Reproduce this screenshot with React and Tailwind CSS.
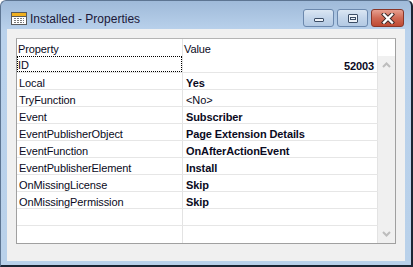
import React from "react";

const rows = [
  { name: "ID", value: "52003", bold: true, right: true, focus: true },
  { name: "Local", value: "Yes", bold: true },
  { name: "TryFunction", value: "<No>" },
  { name: "Event", value: "Subscriber", bold: true },
  { name: "EventPublisherObject", value: "Page Extension Details", bold: true },
  { name: "EventFunction", value: "OnAfterActionEvent", bold: true },
  { name: "EventPublisherElement", value: "Install", bold: true },
  { name: "OnMissingLicense", value: "Skip", bold: true },
  { name: "OnMissingPermission", value: "Skip", bold: true },
  { name: "", value: "" },
  { name: "", value: "" },
];

function TableIcon() {
  return (
    <svg width="16" height="13" viewBox="0 0 16 13">
      <rect x="0.5" y="0.5" width="15" height="12" fill="#fff" stroke="#5a5a5a" />
      <rect x="1" y="1" width="14" height="3" fill="#f0b020" />
      <line x1="1" y1="4.5" x2="15" y2="4.5" stroke="#5a5a5a" />
      <g stroke="#7a7a7a">
        <line x1="3" y1="6.5" x2="13" y2="6.5" />
        <line x1="3" y1="8.5" x2="13" y2="8.5" />
        <line x1="3" y1="10.5" x2="13" y2="10.5" />
      </g>
      <g stroke="#fff">
        <line x1="5.5" y1="6" x2="5.5" y2="11" />
        <line x1="8.5" y1="6" x2="8.5" y2="11" />
        <line x1="11.5" y1="6" x2="11.5" y2="11" />
      </g>
    </svg>
  );
}

function Chevron({ up }) {
  return (
    <svg width="9" height="6" viewBox="0 0 9 6">
      <path
        d={up ? "M1 5 L4.5 1.5 L8 5" : "M1 1 L4.5 4.5 L8 1"}
        fill="none"
        stroke="#bdbdbd"
        strokeWidth="2"
      />
    </svg>
  );
}

export default function App() {
  return (
    <div
      className="w-[413px] h-[267px] flex flex-col rounded-t-[6px] border-t border-l border-[#5d7592] border-r-2 border-b-2 border-r-[#1b2533] border-b-[#1b2533] bg-[linear-gradient(to_bottom,#9fbad9,#bad2ec_30px,#b9d1ea)] overflow-hidden"
      style={{ fontFamily: '"Liberation Sans", Arial, sans-serif' }}
    >
      {/* title bar */}
      <div className="h-[29px] flex items-start">
        <div className="ml-[10px] mt-[11px]">
          <TableIcon />
        </div>
        <div className="ml-[3px] mt-[10px] text-[12px] leading-[16px] text-[#1b1838]">
          Installed - Properties
        </div>
        <div className="ml-auto mr-[7px] mt-[8px] flex gap-[3px]">
          <div className="w-[31px] h-[18px] rounded-[3px] border border-[#6b88ad] bg-[linear-gradient(to_bottom,#dae6f3,#c3d5ea_50%,#b3c9e3)] flex items-center justify-center">
            <div className="w-[10px] h-[4px] mt-[4px] rounded-[1px] border border-[#3b4d66] bg-[#eef3f9]" />
          </div>
          <div className="w-[31px] h-[18px] rounded-[3px] border border-[#6b88ad] bg-[linear-gradient(to_bottom,#dae6f3,#c3d5ea_50%,#b3c9e3)] flex items-center justify-center">
            <div className="w-[10px] h-[9px] rounded-[1px] border border-[#3b4d66] bg-[#eef3f9] flex items-center justify-center">
              <div className="w-[6px] h-[3px] border border-[#3b4d66]" />
            </div>
          </div>
          <div className="w-[33px] h-[18px] rounded-[3px] border border-[#8a3628] bg-[linear-gradient(to_bottom,#e7a090,#d06a55_50%,#bf4a33)] flex items-center justify-center">
            <svg width="14" height="11" viewBox="0 0 14 11">
              <path d="M3 1.5 L11 9.5 M11 1.5 L3 9.5" stroke="#3a2a2a" strokeWidth="4.2" strokeLinecap="square" />
              <path d="M3 1.5 L11 9.5 M11 1.5 L3 9.5" stroke="#ffffff" strokeWidth="2.4" strokeLinecap="square" />
            </svg>
          </div>
        </div>
      </div>

      {/* client area */}
      <div className="flex-1 ml-[6px] mr-[6px] mb-[4px] bg-[#f0f0f0] pt-[9px] pl-[9px] pr-[9px] pb-[17px]">
        <div className="h-full border border-[#a0a0a0] border-t-[#b4b4b4] bg-white flex flex-col text-[11px] leading-[16px] tracking-[-0.1px] text-[#0a0a22]">
          {/* header */}
          <div className="h-[17px] flex">
            <div className="w-[166px] border-r border-[#e3e3e3] pl-[1px] pt-[2px]">Property</div>
            <div className="w-[195px] border-r border-[#e3e3e3] pl-[1px] pt-[2px]">Value</div>
            <div className="flex-1" />
          </div>
          <div className="flex-1 flex">
            <div className="w-[361px] flex flex-col">
              {rows.map((r, i) => (
                <div key={i} className="h-[17px] flex border-b border-[#e6e6e6] last:border-b-0">
                  <div className="w-[166px] border-r border-[#e3e3e3]">
                    <div
                      className={
                        r.focus
                          ? "h-[16px] outline-1 outline-dotted outline-black -outline-offset-1 pl-[1px] pt-[1px]"
                          : "h-[16px] pl-[2px] pt-[2px]"
                      }
                    >
                      {r.name}
                    </div>
                  </div>
                  <div
                    className={
                      "w-[195px] border-r border-[#e3e3e3] pt-[2px] " +
                      (r.right ? "text-right pr-[3px]" : "pl-[3px]") +
                      (r.bold ? " font-bold" : "")
                    }
                  >
                    {r.value}
                  </div>
                </div>
              ))}
            </div>
            {/* scrollbar */}
            <div className="flex-1 bg-[#f0f0f0] flex flex-col items-center justify-between pt-[6px] pb-[6px]">
              <Chevron up />
              <Chevron />
            </div>
          </div>
        </div>
      </div>
    </div>
  );
}
